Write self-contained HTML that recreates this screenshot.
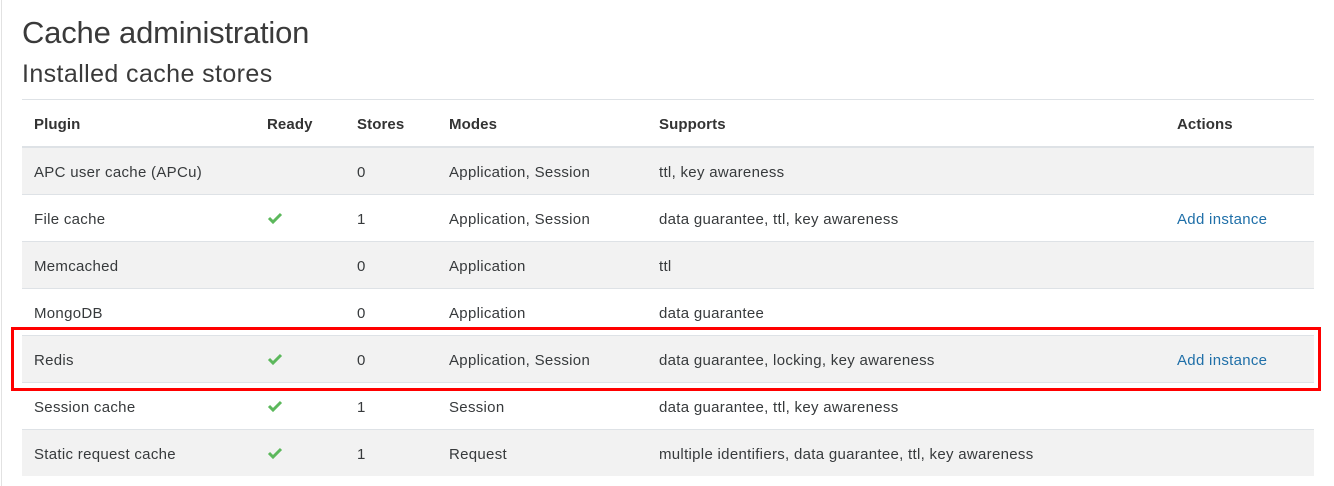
<!DOCTYPE html>
<html><head><style>
body{margin:0;width:1334px;height:486px;background:#fff;font-family:"Liberation Sans",sans-serif;color:#373a3c;position:relative;overflow:hidden}
.lb{position:absolute;left:1px;top:0;width:1px;height:486px;background:#e2e2e2}
h1{position:absolute;left:22px;top:15px;margin:0;font-weight:normal;font-size:31px;color:#3a3a3a;letter-spacing:-0.2px}
h2{position:absolute;left:22px;top:60px;margin:0;font-weight:normal;font-size:25px;color:#3a3a3a;letter-spacing:0.4px}
table{position:absolute;left:22px;top:99px;width:1292px;border-collapse:collapse;font-size:15px;letter-spacing:0.3px}
th,td{text-align:left;padding:2px 0 0 12px;height:44px;border-top:1px solid #dee2e6}
th{font-weight:bold;border-bottom:2px solid #dee2e6;color:#333;letter-spacing:0.1px}
tr:nth-child(odd) td{background:#f2f2f2}
a{text-decoration:none;color:#1f6fa8}
.ck{display:inline-block;width:16px;height:14px;vertical-align:middle;position:relative;top:-2px}
.red{position:absolute;left:11px;top:327px;width:1304px;height:58px;border:3px solid #f00}
</style></head><body>
<div class="lb"></div>
<h1>Cache administration</h1>
<h2>Installed cache stores</h2>
<table>
<thead><tr><th style="width:221px">Plugin</th><th style="width:78px">Ready</th><th style="width:80px">Stores</th><th style="width:198px">Modes</th><th style="width:506px">Supports</th><th>Actions</th></tr></thead>
<tbody>
<tr><td>APC user cache (APCu)</td><td></td><td>0</td><td>Application, Session</td><td>ttl, key awareness</td><td></td></tr>
<tr><td>File cache</td><td><svg class="ck" viewBox="0 0 16 14"><path d="M2 7l4 4 8-8" fill="none" stroke="#5cb85c" stroke-width="3"/></svg></td><td>1</td><td>Application, Session</td><td>data guarantee, ttl, key awareness</td><td><a>Add instance</a></td></tr>
<tr><td>Memcached</td><td></td><td>0</td><td>Application</td><td>ttl</td><td></td></tr>
<tr><td>MongoDB</td><td></td><td>0</td><td>Application</td><td>data guarantee</td><td></td></tr>
<tr><td>Redis</td><td><svg class="ck" viewBox="0 0 16 14"><path d="M2 7l4 4 8-8" fill="none" stroke="#5cb85c" stroke-width="3"/></svg></td><td>0</td><td>Application, Session</td><td>data guarantee, locking, key awareness</td><td><a>Add instance</a></td></tr>
<tr><td>Session cache</td><td><svg class="ck" viewBox="0 0 16 14"><path d="M2 7l4 4 8-8" fill="none" stroke="#5cb85c" stroke-width="3"/></svg></td><td>1</td><td>Session</td><td>data guarantee, ttl, key awareness</td><td></td></tr>
<tr><td>Static request cache</td><td><svg class="ck" viewBox="0 0 16 14"><path d="M2 7l4 4 8-8" fill="none" stroke="#5cb85c" stroke-width="3"/></svg></td><td>1</td><td>Request</td><td>multiple identifiers, data guarantee, ttl, key awareness</td><td></td></tr>
</tbody></table>
<div class="red"></div>
</body></html>
